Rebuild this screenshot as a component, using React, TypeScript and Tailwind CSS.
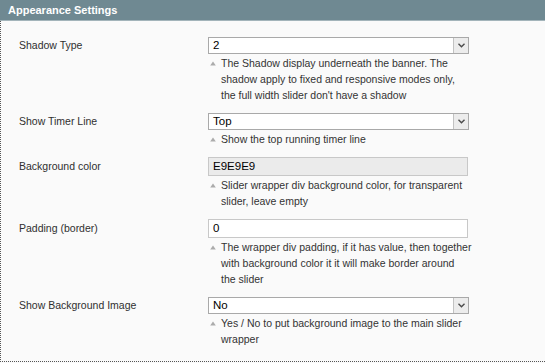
import React from 'react';

type Field = {
  label: string;
  kind: 'select' | 'input' | 'locked';
  value: string;
  note: string[];
};

const FIELDS: Field[] = [
  {
    label: 'Shadow Type',
    kind: 'select',
    value: '2',
    note: [
      'The Shadow display underneath the banner. The',
      'shadow apply to fixed and responsive modes only,',
      "the full width slider don't have a shadow",
    ],
  },
  { label: 'Show Timer Line', kind: 'select', value: 'Top', note: ['Show the top running timer line'] },
  {
    label: 'Background color',
    kind: 'locked',
    value: 'E9E9E9',
    note: ['Slider wrapper div background color, for transparent', 'slider, leave empty'],
  },
  {
    label: 'Padding (border)',
    kind: 'input',
    value: '0',
    note: [
      'The wrapper div padding, if it has value, then together',
      'with background color it it will make border around',
      'the slider',
    ],
  },
  {
    label: 'Show Background Image',
    kind: 'select',
    value: 'No',
    note: ['Yes / No to put background image to the main slider', 'wrapper'],
  },
];

const Control: React.FC<{ field: Field }> = ({ field }) => {
  if (field.kind === 'select') {
    return (
      <div className="flex h-[17px] w-[261px] border border-[#a9a9a9] bg-white">
        <span className="flex-1 pl-[4px] text-[11.5px] leading-[15px] text-black">{field.value}</span>
        <span className="flex w-[15px] items-center justify-center border-l border-[#c2c2c2] bg-[#ececec]">
          <svg width="7" height="5" viewBox="0 0 7 5">
            <path d="M0.5 0.8 L3.5 3.8 L6.5 0.8" fill="none" stroke="#4a4a4a" strokeWidth="1.4" />
          </svg>
        </span>
      </div>
    );
  }
  return (
    <div
      className={`h-[19px] w-[260px] border border-[#c8c8c8] pl-[4px] text-[11.5px] leading-[17px] text-black ${
        field.kind === 'locked' ? 'bg-[#ebebeb]' : 'bg-white'
      }`}
    >
      {field.value}
    </div>
  );
};

export default function App() {
  return (
    <div className="h-[363px] w-[545px] overflow-hidden bg-[#fafafa] font-['Liberation_Sans',Arial,sans-serif]">
      {/* Section head */}
      <div className="flex h-[21px] items-center border-b border-[#a3b4ba] bg-[#6f8992] pl-[8px] text-[11px] font-bold text-white">
        Appearance Settings
      </div>

      <div className="border-b border-l border-dotted border-[#555] pb-[9px] pt-[11px]">
        {FIELDS.map(f => {
          const h = f.kind === 'select' ? 'h-[17px]' : 'h-[19px]';
          return (
            <div key={f.label} className="flex py-[5px]">
              <div className={`flex w-[207px] items-center pl-[18px] text-[10.5px] text-[#2f2f2f] ${h}`}>
                {f.label}
              </div>
              <div>
                <Control field={f} />
                <div className="mt-[1px] flex">
                  <span className="flex h-[16px] w-[13px] items-center pl-[2px]">
                    <svg width="6" height="5" viewBox="0 0 6 5">
                      <path d="M3 0.5 L5.8 4.5 L0.2 4.5 Z" fill="#ababab" />
                    </svg>
                  </span>
                  <div className="text-[10.5px] leading-[16px] text-[#333]">
                    {f.note.map(line => (
                      <div key={line}>{line}</div>
                    ))}
                  </div>
                </div>
              </div>
            </div>
          );
        })}
      </div>
    </div>
  );
}
